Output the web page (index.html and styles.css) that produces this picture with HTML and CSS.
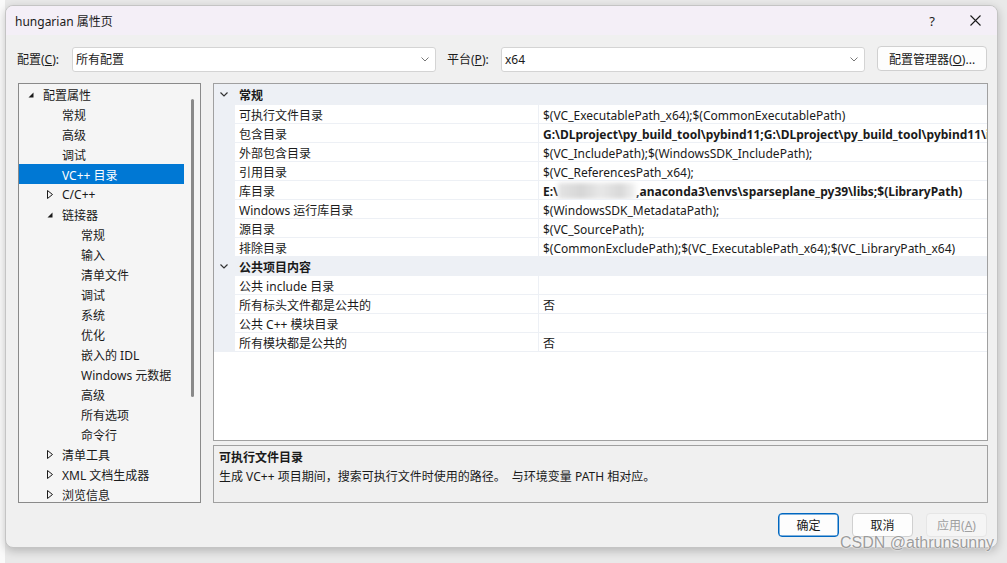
FILE: index.html
```html
<!DOCTYPE html>
<html lang="zh-CN">
<head>
    <meta charset="UTF-8">
    <meta name="viewport" content="width=device-width, initial-scale=1.0">
    <title>hungarian 属性页</title>
    <link rel="stylesheet" href="styles.css">
</head>
<body>
<div class="screen">
    <div class="dialog">
        <div class="titlebar">
            <span class="title">hungarian 属性页</span>
            <span class="help">?</span>
            <span class="close">
                <svg width="11" height="11" viewBox="0 0 11 11"><path d="M0.5 0.5 L10.5 10.5 M10.5 0.5 L0.5 10.5" stroke="#1a1a1a" stroke-width="1.1" fill="none"/></svg>
            </span>
        </div>

        <div class="content">
            <div class="config-row">
                <span class="label lbl-config">配置(<u>C</u>):</span>
                <div class="combo">
                    <span>所有配置</span>
                    <svg width="8" height="5" viewBox="0 0 8 5"><polyline points="0.5,0.5 4,4 7.5,0.5" stroke="#777" stroke-width="1" fill="none"/></svg>
                </div>
                <span class="label lbl-platform">平台(<u>P</u>):</span>
                <div class="combo">
                    <span>x64</span>
                    <svg width="8" height="5" viewBox="0 0 8 5"><polyline points="0.5,0.5 4,4 7.5,0.5" stroke="#777" stroke-width="1" fill="none"/></svg>
                </div>
                <button class="btn btn-manager">配置管理器(<u>O</u>)...</button>
            </div>

            <div class="main">
                <div class="tree">
                    <ul class="tree-list">
                        <li class="item lv0"><span class="tw"><svg width="6" height="6" viewBox="0 0 6 6"><path d="M5.5 0.5 L5.5 5.5 L0.5 5.5 Z" fill="#1a1a1a"/></svg></span>配置属性</li>
                        <li class="item lv1"><span class="tw"></span>常规</li>
                        <li class="item lv1"><span class="tw"></span>高级</li>
                        <li class="item lv1"><span class="tw"></span>调试</li>
                        <li class="item lv1 selected"><span class="tw"></span>VC++ 目录</li>
                        <li class="item lv1"><span class="tw"><svg width="6" height="9" viewBox="0 0 6 9"><path d="M0.5 0.5 L5.5 4.5 L0.5 8.5 Z" stroke="#1a1a1a" stroke-width="1" fill="none"/></svg></span>C/C++</li>
                        <li class="item lv1"><span class="tw"><svg width="6" height="6" viewBox="0 0 6 6"><path d="M5.5 0.5 L5.5 5.5 L0.5 5.5 Z" fill="#1a1a1a"/></svg></span>链接器</li>
                        <li class="item lv2"><span class="tw"></span>常规</li>
                        <li class="item lv2"><span class="tw"></span>输入</li>
                        <li class="item lv2"><span class="tw"></span>清单文件</li>
                        <li class="item lv2"><span class="tw"></span>调试</li>
                        <li class="item lv2"><span class="tw"></span>系统</li>
                        <li class="item lv2"><span class="tw"></span>优化</li>
                        <li class="item lv2"><span class="tw"></span>嵌入的 IDL</li>
                        <li class="item lv2"><span class="tw"></span>Windows 元数据</li>
                        <li class="item lv2"><span class="tw"></span>高级</li>
                        <li class="item lv2"><span class="tw"></span>所有选项</li>
                        <li class="item lv2"><span class="tw"></span>命令行</li>
                        <li class="item lv1"><span class="tw"><svg width="6" height="9" viewBox="0 0 6 9"><path d="M0.5 0.5 L5.5 4.5 L0.5 8.5 Z" stroke="#1a1a1a" stroke-width="1" fill="none"/></svg></span>清单工具</li>
                        <li class="item lv1"><span class="tw"><svg width="6" height="9" viewBox="0 0 6 9"><path d="M0.5 0.5 L5.5 4.5 L0.5 8.5 Z" stroke="#1a1a1a" stroke-width="1" fill="none"/></svg></span>XML 文档生成器</li>
                        <li class="item lv1"><span class="tw"><svg width="6" height="9" viewBox="0 0 6 9"><path d="M0.5 0.5 L5.5 4.5 L0.5 8.5 Z" stroke="#1a1a1a" stroke-width="1" fill="none"/></svg></span>浏览信息</li>
                    </ul>
                    <div class="scrollbar"><div class="thumb"></div></div>
                </div>

                <div class="right">
                    <div class="grid">
                        <div class="rows">
                            <div class="row header first">
                                <span class="gutter"><svg width="8" height="5" viewBox="0 0 8 5"><polyline points="0.5,0.5 4,4 7.5,0.5" stroke="#333" stroke-width="1.2" fill="none"/></svg></span>
                                <span class="hname">常规</span>
                            </div>
                            <div class="row"><span class="gutter"></span><span class="name">可执行文件目录</span><span class="value">$(VC_ExecutablePath_x64);$(CommonExecutablePath)</span></div>
                            <div class="row"><span class="gutter"></span><span class="name">包含目录</span><span class="value bold">G:\DLproject\py_build_tool\pybind11;G:\DLproject\py_build_tool\pybind11\include;$(IncludePath)</span></div>
                            <div class="row"><span class="gutter"></span><span class="name">外部包含目录</span><span class="value">$(VC_IncludePath);$(WindowsSDK_IncludePath);</span></div>
                            <div class="row"><span class="gutter"></span><span class="name">引用目录</span><span class="value">$(VC_ReferencesPath_x64);</span></div>
                            <div class="row"><span class="gutter"></span><span class="name">库目录</span><span class="value bold">E:\<span class="blur"></span>,anaconda3\envs\sparseplane_py39\libs;$(LibraryPath)</span></div>
                            <div class="row"><span class="gutter"></span><span class="name">Windows 运行库目录</span><span class="value">$(WindowsSDK_MetadataPath);</span></div>
                            <div class="row"><span class="gutter"></span><span class="name">源目录</span><span class="value">$(VC_SourcePath);</span></div>
                            <div class="row"><span class="gutter"></span><span class="name">排除目录</span><span class="value">$(CommonExcludePath);$(VC_ExecutablePath_x64);$(VC_LibraryPath_x64)</span></div>
                            <div class="row header">
                                <span class="gutter"><svg width="8" height="5" viewBox="0 0 8 5"><polyline points="0.5,0.5 4,4 7.5,0.5" stroke="#333" stroke-width="1.2" fill="none"/></svg></span>
                                <span class="hname">公共项目内容</span>
                            </div>
                            <div class="row"><span class="gutter"></span><span class="name">公共 include 目录</span><span class="value"></span></div>
                            <div class="row"><span class="gutter"></span><span class="name">所有标头文件都是公共的</span><span class="value">否</span></div>
                            <div class="row"><span class="gutter"></span><span class="name">公共 C++ 模块目录</span><span class="value"></span></div>
                            <div class="row"><span class="gutter"></span><span class="name">所有模块都是公共的</span><span class="value">否</span></div>
                        </div>
                    </div>
                    <div class="desc">
                        <div class="desc-title">可执行文件目录</div>
                        <div class="desc-text">生成 VC++ 项目期间，搜索可执行文件时使用的路径。 &nbsp;与环境变量 PATH 相对应。</div>
                    </div>
                </div>
            </div>

            <div class="footer">
                <button class="btn btn-default">确定</button>
                <button class="btn">取消</button>
                <button class="btn btn-disabled">应用(<u>A</u>)</button>
            </div>
        </div>
    </div>
    <div class="watermark">CSDN @athrunsunny</div>
</div>
</body>
</html>
```

FILE: styles.css
```css
html, body {
    margin: 0;
    height: 100%;
}

body {
    background: linear-gradient(to right, #fafafa 0, #fafafa 5px, #e9e9e9 5px);
    font-family: "Noto Sans", "Noto Sans CJK SC", sans-serif;
    font-size: 12px;
    color: #1a1a1a;
    overflow: hidden;
}

.screen {
    position: relative;
    padding: 5px 0 0 5px;
}

.dialog {
    box-sizing: border-box;
    width: 993px;
    height: 543px;
    background-color: #f0f0f0;
    border: 1px solid #c4c4c4;
    border-radius: 8px;
    overflow: hidden;
    box-shadow: 0 3px 10px rgba(0, 0, 0, 0.22);
}

/* title bar */
.titlebar {
    display: flex;
    align-items: center;
    height: 29px;
    background-color: #f4eff7;
    padding-left: 9px;
}

.title {
    flex: 1;
}

.help {
    font-size: 13px;
    margin-right: 35px;
}

.close {
    display: flex;
    margin-right: 16px;
}

.content {
    padding: 0 9px 0 11px;
}

/* configuration row */
.config-row {
    display: flex;
    align-items: center;
    margin-top: 11px;
    height: 26px;
}

.label {
    white-space: nowrap;
}

.lbl-config {
    width: 55px;
}

.lbl-platform {
    width: 54px;
    margin-left: 11px;
}

.combo {
    box-sizing: border-box;
    display: flex;
    align-items: center;
    justify-content: space-between;
    width: 364px;
    height: 25px;
    background-color: #fff;
    border: 1px solid #d4d4d4;
    border-radius: 3px;
    padding: 0 6px 0 3px;
}

.btn {
    box-sizing: border-box;
    font-family: inherit;
    font-size: 12px;
    color: #1a1a1a;
    background-color: #fdfdfd;
    border: 1px solid #d0d0d0;
    border-radius: 4px;
    height: 24px;
    width: 61px;
    padding: 0;
}

.btn-manager {
    width: 110px;
    height: 25px;
    margin-left: 12px;
    margin-top: -1px;
}

/* main area */
.main {
    display: flex;
    margin-top: 11px;
    height: 420px;
}

.tree {
    box-sizing: border-box;
    display: flex;
    flex: none;
    width: 183px;
    margin-left: 1px;
    border: 1px solid #8a8a8a;
    background-color: #f5f5f5;
    overflow: hidden;
}

.tree-list {
    list-style: none;
    margin: 0;
    padding: 0;
    width: 165px;
    flex: none;
}

.item {
    box-sizing: border-box;
    display: flex;
    align-items: center;
    height: 20px;
    padding-top: 1px;
    white-space: nowrap;
}

.lv0 { padding-left: 9px; }
.lv1 { padding-left: 28px; }
.lv2 { padding-left: 47px; }

.tw {
    display: inline-flex;
    align-items: center;
    width: 15px;
    height: 18px;
    flex: none;
}

.item.selected {
    background-color: #0078d4;
    color: #fff;
}

.scrollbar {
    flex: 1;
}

.thumb {
    width: 3px;
    height: 298px;
    margin: 15px 0 0 7px;
    background-color: #8a8a8a;
    border-radius: 2px;
}

.right {
    display: flex;
    flex-direction: column;
    flex: 1;
    min-width: 0;
    margin-left: 12px;
}

/* property grid */
.grid {
    box-sizing: border-box;
    height: 358px;
    border: 1px solid #a0a0a0;
    background-color: #fff;
    overflow: hidden;
}

.rows {
    display: flex;
    flex-direction: column;
    gap: 1px;
    padding-bottom: 1px;
    background-color: #edf0f5;
}

.row {
    display: flex;
    height: 18px;
    line-height: 21px;
    white-space: nowrap;
}

.row.first {
    height: 20px;
    line-height: 23px;
}

.gutter {
    display: flex;
    align-items: center;
    width: 21px;
    padding: 1px 0 0 6px;
    box-sizing: border-box;
    flex: none;
}

.hname {
    font-weight: bold;
    padding-left: 4px;
    overflow: hidden;
}

.name {
    width: 303px;
    flex: none;
    background-color: #fff;
    padding-left: 4px;
    box-sizing: border-box;
    overflow: hidden;
}

.value {
    flex: 1;
    min-width: 0;
    margin-left: 1px;
    background-color: #fff;
    padding-left: 4px;
    overflow: hidden;
}

.value.bold {
    font-weight: bold;
}

.blur {
    display: inline-block;
    width: 78px;
    height: 16px;
    vertical-align: -3px;
    background: linear-gradient(to right, #e4e4e4, #d6d6d6 30%, #e8e8e8 55%, #d8d8d8 80%, #f4f4f4);
    filter: blur(2px);
}

/* description */
.desc {
    box-sizing: border-box;
    height: 58px;
    margin-top: 4px;
    border: 1px solid #a0a0a0;
    padding: 2px 5px 0;
    line-height: 19px;
}

.desc-title {
    font-weight: bold;
}

/* buttons */
.footer {
    display: flex;
    justify-content: flex-end;
    gap: 13px;
    margin-top: 10px;
    padding-right: 1px;
}

.btn-default {
    border-color: #0067c0;
    box-shadow: inset 0 0 0 0.5px #0067c0;
}

.btn-disabled {
    color: #a0a0a0;
    background-color: #f5f5f5;
    border-color: #e6e6e6;
}

.watermark {
    position: absolute;
    left: 840px;
    top: 534px;
    font-family: "Liberation Sans", sans-serif;
    font-size: 16px;
    color: #9c9c9c;
    text-shadow: 0 0 2px #fff, 0 0 1px #fff;
}
```
